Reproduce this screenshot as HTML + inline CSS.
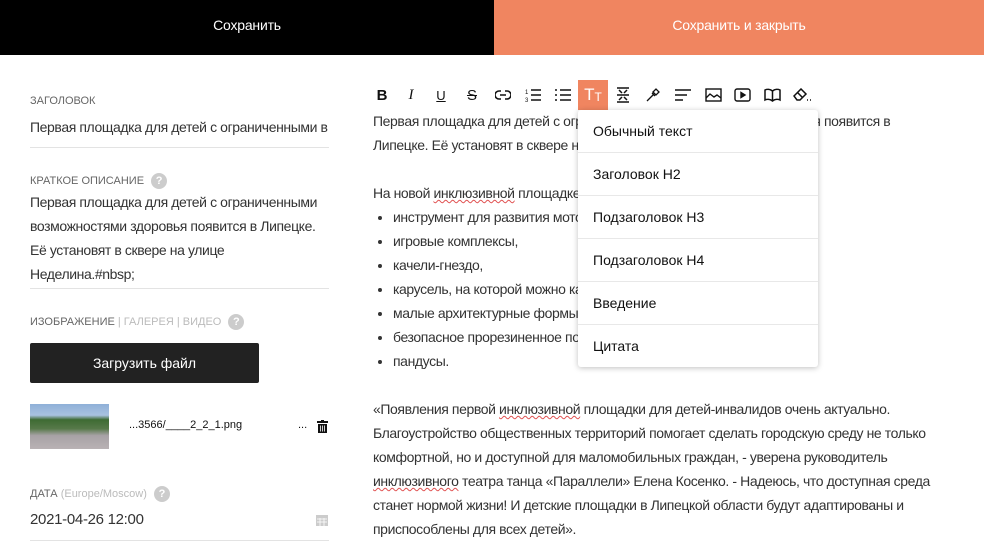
<!DOCTYPE html>
<html><head><meta charset="utf-8"><style>
*{margin:0;padding:0;box-sizing:border-box}
body{width:984px;height:553px;overflow:hidden;background:#fff;font-family:"Liberation Sans","DejaVu Sans",sans-serif;color:#333;position:relative}
.bar{position:absolute;top:0;height:50px;color:#fff;font-size:14px;display:flex;align-items:center;justify-content:center;letter-spacing:-0.2px}
.abs{position:absolute}
.lbl{font-size:11px;color:#666;letter-spacing:0}
.q{display:inline-block;width:16px;height:16px;border-radius:50%;background:#ccc;color:#fff;font-size:11px;text-align:center;line-height:16px;font-weight:bold;vertical-align:middle;margin-left:4px}
.line{position:absolute;left:30px;width:299px;height:1px;background:#e3e3e3}
.t{font-size:14px;color:#333;letter-spacing:-0.4px}
.ed{position:absolute;left:373px;font-size:14px;color:#333;white-space:nowrap;letter-spacing:-0.4px}
.tb{position:absolute;top:80px;width:30px;height:30px;display:flex;align-items:center;justify-content:center;font-size:15px;color:#111}
.dd{position:absolute;left:578px;top:110px;width:240px;height:257px;background:#fff;box-shadow:0 1px 6px rgba(0,0,0,.25);border-radius:3px}
.dd div{height:43px;border-bottom:1px solid #e8e8e8;padding-left:15px;line-height:43px;font-size:14px;color:#111}
.dd div:last-child{border-bottom:none}
u.w{text-decoration:underline wavy #e05050;text-decoration-thickness:1px}
</style></head><body>
<div class="bar" style="left:0;width:494px;background:#000">Сохранить</div>
<div class="bar" style="left:494px;width:490px;background:#F08560;height:55px;padding-bottom:5px">Сохранить и закрыть</div>
<div class="abs" style="left:0;top:50px;width:494px;height:5px;background:#000"></div>

<div class="abs lbl" style="left:30px;top:95px">ЗАГОЛОВОК</div>
<div class="abs t" style="left:30px;top:119px">Первая площадка для детей с ограниченными в</div>
<div class="line" style="top:147px"></div>
<div class="abs lbl" style="left:30px;top:173px">КРАТКОЕ ОПИСАНИЕ <span class="q">?</span></div>
<div class="abs t" style="left:30px;top:190px;line-height:24px;width:300px">Первая площадка для детей с ограниченными возможностями здоровья появится в Липецке. Её установят в сквере на улице Неделина.#nbsp;</div>
<div class="line" style="top:288px"></div>
<div class="abs lbl" style="left:30px;top:314px">ИЗОБРАЖЕНИЕ <span style="color:#bbb">| ГАЛЕРЕЯ | ВИДЕО</span> <span class="q">?</span></div>
<div class="abs" style="left:30px;top:343px;width:229px;height:40px;background:#222;color:#fff;font-size:14px;text-align:center;line-height:40px;border-radius:2px">Загрузить файл</div>
<div class="abs" style="left:30px;top:404px;width:79px;height:45px;background:linear-gradient(#8fb0d8 0%,#a9c2e0 25%,#3e6b33 35%,#57794a 55%,#a7a2a6 70%,#b9b2b4 100%)"></div>
<div class="abs" style="left:129px;top:419px;font-size:11px;color:#111">...3566/____2_2_1.png</div>
<div class="abs" style="left:298px;top:419px;font-size:11px;color:#111">...</div>
<svg class="abs" style="left:317px;top:420px" width="11" height="13" viewBox="0 0 11 13"><rect x="0" y="1" width="11" height="2" fill="#111"/><rect x="4" y="0" width="3" height="1" fill="#111"/><path d="M1 4h9v9H1z" fill="#111"/><path d="M3.5 5.5v6M5.5 5.5v6M7.5 5.5v6" stroke="#fff" stroke-width="0.8"/></svg>
<div class="abs lbl" style="left:30px;top:486px">ДАТА <span style="color:#bbb">(Europe/Moscow)</span> <span class="q">?</span></div>
<div class="abs" style="left:30px;top:511px;font-size:15px;color:#333;letter-spacing:-0.3px">2021-04-26 12:00</div>
<svg class="abs" style="left:316px;top:513px" width="12" height="13" viewBox="0 0 12 13"><rect x="0" y="2" width="12" height="11" fill="#ccc"/><path d="M1 6h10M1 9h10M4 5v8M8 5v8" stroke="#fff" stroke-width="0.8"/></svg>
<div class="line" style="top:540px"></div>

<div class="tb" style="left:367px;font-weight:bold">B</div>
<div class="tb" style="left:396px;font-style:italic;font-family:'Liberation Serif',serif">I</div>
<div class="tb" style="left:426px;text-decoration:underline;font-size:13px">U</div>
<div class="tb" style="left:457px;text-decoration:line-through">S</div>
<div class="tb" style="left:488px"><svg width="16" height="10" viewBox="0 0 16 10" fill="none" stroke="#111" stroke-width="1.6"><path d="M6 1H4a4 4 0 000 8h2M10 1h2a4 4 0 010 8h-2M5 5h6"/></svg></div>
<div class="tb" style="left:518px"><svg width="16" height="14" viewBox="0 0 16 14" stroke="#111" stroke-width="1.5"><path d="M6 2h10M6 7h10M6 12h10"/><text x="0" y="6" font-size="6" fill="#111" stroke="none">1</text><text x="0" y="14" font-size="6" fill="#111" stroke="none">3</text></svg></div>
<div class="tb" style="left:548px"><svg width="16" height="14" viewBox="0 0 16 14" stroke="#111" stroke-width="1.5"><path d="M5 2h11M5 7h11M5 12h11M0 2h2M0 7h2M0 12h2"/></svg></div>
<div class="tb" style="left:578px;background:#F08560;color:#fff;font-size:17px">T<span style="font-size:12px;margin-top:4px">T</span></div>
<div class="tb" style="left:608px"><svg width="14" height="16" viewBox="0 0 14 16" stroke="#111" stroke-width="1.5" fill="none"><path d="M1 1h12M1 15h12M1 8h12M3 3l3 3M11 3L8 6M3 13l3-3M11 13l-3-3"/></svg></div>
<div class="tb" style="left:638px"><svg width="14" height="14" viewBox="0 0 14 14" stroke="#111" stroke-width="1.3" fill="none"><path d="M1 13l7-7M7 4l3-3 3 3-3 3zM6 5l3 3"/></svg></div>
<div class="tb" style="left:668px"><svg width="16" height="12" viewBox="0 0 16 12" stroke="#111" stroke-width="1.5"><path d="M0 1h16M0 6h12M0 11h8"/></svg></div>
<div class="tb" style="left:698px"><svg width="17" height="14" viewBox="0 0 17 14" stroke="#111" stroke-width="1.4" fill="none"><rect x="1" y="1" width="15" height="12"/><path d="M1 10l4-4 4 3 3-2 4 3"/></svg></div>
<div class="tb" style="left:727px"><svg width="17" height="14" viewBox="0 0 17 14" stroke="#111" stroke-width="1.4" fill="none"><rect x="1" y="1" width="15" height="12" rx="2"/><path d="M7 4.5v5l4-2.5z" fill="#111"/></svg></div>
<div class="tb" style="left:757px"><svg width="17" height="14" viewBox="0 0 17 14" stroke="#111" stroke-width="1.5" fill="none"><path d="M8.5 3v10M8.5 3C6 1 3 1 1 2v10c2-1 5-1 7.5 1 2.5-2 5.5-2 7.5-1V2c-2-1-5-1-7.5 1"/></svg></div>
<div class="tb" style="left:787px"><svg width="18" height="14" viewBox="0 0 18 14" stroke="#111" stroke-width="1.5" fill="none"><path d="M1 8l7-7 5 5-6 6H4zM5 5l5 5M14 12h1M17 12h1"/></svg></div>

<div class="ed" style="top:109px;line-height:24px">Первая площадка для детей с ограниченными возможностями здоровья появится в<br>Липецке. Её установят в сквере на улице Неделина.<br><br>На новой <u class="w">инклюзивной</u> площадке будут:</div>
<ul class="ed" style="top:205px;line-height:24px;padding-left:20px;left:373px">
<li>инструмент для развития моторики,</li><li>игровые комплексы,</li><li>качели-гнездо,</li><li>карусель, на которой можно кататься,</li><li>малые архитектурные формы,</li><li>безопасное прорезиненное покрытие,</li><li>пандусы.</li></ul>
<div class="ed" style="top:397px;line-height:24px">«Появления первой <u class="w">инклюзивной</u> площадки для детей-инвалидов очень актуально.<br>Благоустройство общественных территорий помогает сделать городскую среду не только<br>комфортной, но и доступной для маломобильных граждан, - уверена руководитель<br><u class="w">инклюзивного</u> театра танца «Параллели» Елена Косенко. - Надеюсь, что доступная среда<br>станет нормой жизни! И детские площадки в Липецкой области будут адаптированы и<br>приспособлены для всех детей».</div>

<div class="dd"><div>Обычный текст</div><div>Заголовок H2</div><div>Подзаголовок H3</div><div>Подзаголовок H4</div><div>Введение</div><div>Цитата</div></div>
</body></html>
